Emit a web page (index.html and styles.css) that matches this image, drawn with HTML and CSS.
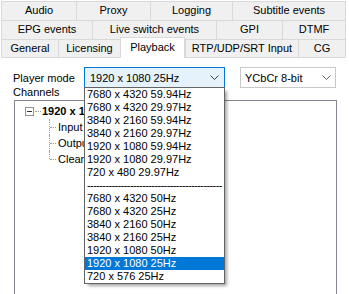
FILE: index.html
```html
<!DOCTYPE html>
<html>
<head>
<meta charset="utf-8">
<link rel="stylesheet" href="styles.css">
</head>
<body>
<div class="tabs">
  <div class="tabrow r1">
    <div class="tab">Audio</div>
    <div class="tab">Proxy</div>
    <div class="tab">Logging</div>
    <div class="tab">Subtitle events</div>
  </div>
  <div class="tabrow r2">
    <div class="tab">EPG events</div>
    <div class="tab">Live switch events</div>
    <div class="tab">GPI</div>
    <div class="tab">DTMF</div>
  </div>
  <div class="tabrow r3">
    <div class="tab">General</div>
    <div class="tab">Licensing</div>
    <div class="tab sel">Playback</div>
    <div class="tab">RTP/UDP/SRT Input</div>
    <div class="tab">CG</div>
  </div>
</div>
<div class="pane">
  <div class="mode-row">
    <span class="lbl-mode">Player mode</span>
    <div class="combo c1">
      <span>1920 x 1080 25Hz</span>
      <svg class="chev" width="9" height="5" viewBox="0 0 9 5"><polyline points="0.5,0.5 4.5,4.5 8.5,0.5" fill="none" stroke="#404040" stroke-width="1"/></svg>
      <ul class="list">
        <li>7680 x 4320 59.94Hz</li>
        <li>7680 x 4320 29.97Hz</li>
        <li>3840 x 2160 59.94Hz</li>
        <li>3840 x 2160 29.97Hz</li>
        <li>1920 x 1080 59.94Hz</li>
        <li>1920 x 1080 29.97Hz</li>
        <li>720 x 480 29.97Hz</li>
        <li class="sep">--------------------------------------------</li>
        <li>7680 x 4320 50Hz</li>
        <li>7680 x 4320 25Hz</li>
        <li>3840 x 2160 50Hz</li>
        <li>3840 x 2160 25Hz</li>
        <li>1920 x 1080 50Hz</li>
        <li class="sel">1920 x 1080 25Hz</li>
        <li>720 x 576 25Hz</li>
      </ul>
    </div>
    <div class="combo c2">
      <span>YCbCr 8-bit</span>
      <svg class="chev" width="9" height="5" viewBox="0 0 9 5"><polyline points="0.5,0.5 4.5,4.5 8.5,0.5" fill="none" stroke="#606060" stroke-width="1"/></svg>
    </div>
  </div>
  <div class="lbl-ch">Channels</div>
  <div class="tree">
    <div class="node root"><span class="exp"></span><span class="hline"></span><span class="rtext">1920 x 1080 25Hz</span></div>
    <div class="node child">Input</div>
    <div class="node child">Output</div>
    <div class="node child last">Clean feed</div>
  </div>
</div>
</body>
</html>
```
FILE: styles.css
```css
html, body { margin: 0; padding: 0; }
body {
  width: 349px;
  height: 294px;
  overflow: hidden;
  background: #ffffff;
  font-family: "Liberation Sans", Arial, sans-serif;
  font-size: 11px;
  color: #000;
}
.tabs { margin: 1px 0 0 1px; width: 345px; }
.tabrow { display: grid; height: 19px; }
.r1 { grid-template-columns: 75px 74px 82px 114px; }
.r2 { grid-template-columns: 91px 124px 66px 64px; }
.r3 { grid-template-columns: 57px 62px 65px 113px 48px; }
.tab {
  box-sizing: border-box;
  height: 19px;
  border-top: 1px solid #d9d9d9;
  border-left: 1px solid #d9d9d9;
  background: #f0f0f0;
  text-align: center;
  line-height: 17px;
  white-space: nowrap;
}
.tab:last-child { border-right: 1px solid #d9d9d9; }
.r3 .tab { border-bottom: 1px solid #d9d9d9; }
.r3 .tab.sel {
  position: relative;
  z-index: 1;
  margin-top: -2px;
  height: 21px;
  background: #ffffff;
  border-right: 1px solid #d9d9d9;
  border-bottom: none;
  line-height: 19px;
}
.pane { padding: 9px 0 0 13px; }
.mode-row { display: flex; align-items: center; height: 21px; }
.lbl-mode { width: 71px; }
.combo {
  position: relative;
  box-sizing: border-box;
  height: 21px;
  border: 1px solid #c8c8c8;
  background: #ffffff;
  display: flex;
  align-items: center;
  padding-left: 4px;
  white-space: nowrap;
}
.combo .chev { margin-left: auto; margin-right: 5px; }
.c1 { width: 141px; background: #e5f1fb; border-color: #0078d7; padding-left: 5px; }
.c2 { width: 96px; margin-left: 15px; }
.c2 .chev { margin-right: 4px; }
.list {
  position: absolute;
  z-index: 5;
  left: -1px;
  top: 19px;
  width: 141px;
  box-sizing: border-box;
  margin: 0;
  padding: 0;
  list-style: none;
  background: #ffffff;
  border: 1px solid #646464;
  box-shadow: 3px 3px 3px -1px rgba(0,0,0,0.35);
}
.list li {
  height: 13px;
  line-height: 13px;
  padding-left: 2px;
  white-space: nowrap;
  overflow: hidden;
}
.list li.sel { background: #0078d7; color: #ffffff; }
.list li.sep { letter-spacing: -0.6px; line-height: 12px; }
.lbl-ch { height: 12px; line-height: 8px; }
.tree {
  margin-left: 1px;
  width: 323px;
  height: 200px;
  box-sizing: border-box;
  border: 1px solid #828790;
  padding-top: 2px;
}
.node { position: relative; height: 16px; display: flex; align-items: center; white-space: nowrap; }
.root { padding-left: 10px; }
.exp {
  position: relative;
  box-sizing: border-box;
  width: 9px;
  height: 9px;
  border: 1px solid #919191;
  background: #fff;
}
.exp::after {
  content: "";
  position: absolute;
  left: 1px;
  top: 3px;
  width: 5px;
  height: 1px;
  background: #303030;
}
.hline { width: 6px; margin-left: 1px; border-top: 1px dotted #a0a0a0; }
.rtext { margin-left: 1px; font-weight: bold; }
.child { padding-left: 43px; }
.child::before {
  content: "";
  position: absolute;
  left: 34px;
  top: 0;
  bottom: 0;
  border-left: 1px dotted #a0a0a0;
}
.child.last::before { bottom: 8px; }
.child::after {
  content: "";
  position: absolute;
  left: 35px;
  top: 8px;
  width: 6px;
  border-top: 1px dotted #a0a0a0;
}
```
